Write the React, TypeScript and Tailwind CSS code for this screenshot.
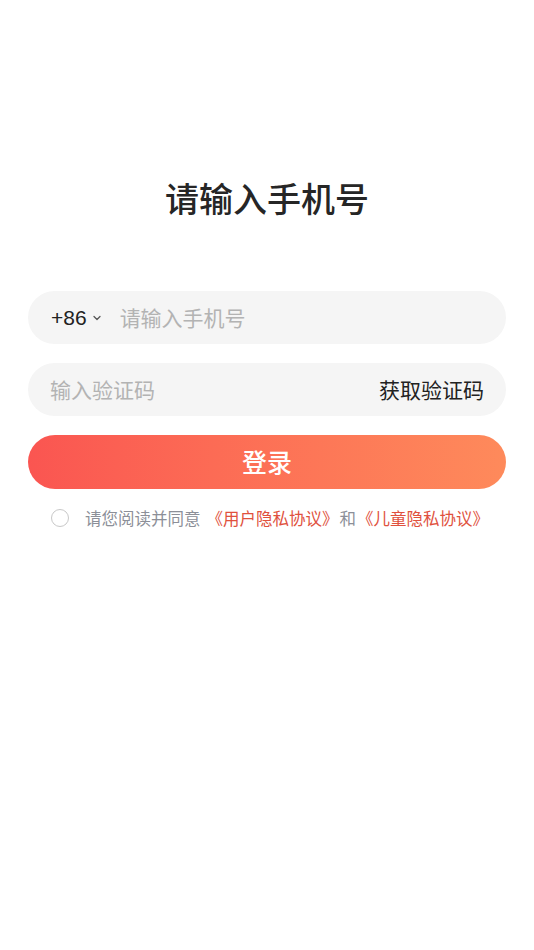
import { ChevronDown } from "lucide-react";

const font = { fontFamily: '"Noto Sans CJK SC", "Noto Sans", sans-serif' };
const latin = { fontFamily: '"Liberation Sans", "Noto Sans CJK SC", sans-serif' };

export default function App() {
  return (
    <div className="min-h-[950px] w-full bg-white px-[28px]" style={font}>
      <h1 className="pt-[176px] text-center text-[34px] font-medium leading-[44px] text-[#262626]">
        请输入手机号
      </h1>

      <div className="mt-[71px] flex h-[53px] items-center rounded-full bg-[#f5f5f5] pl-[23px] pr-6">
        <span className="text-[21px] text-[#222]" style={latin}>+86</span>
        <ChevronDown className="ml-[4px] h-3 w-3 text-[#555]" strokeWidth={2.5} />
        <span className="ml-[17px] text-[21px] text-[#b3b3b3]">请输入手机号</span>
      </div>

      <div className="mt-[19px] flex h-[53px] items-center justify-between rounded-full bg-[#f5f5f5] pl-[22px] pr-[22px]">
        <span className="text-[21px] text-[#b3b3b3]">输入验证码</span>
        <span className="text-[21px] text-[#222]">获取验证码</span>
      </div>

      <button className="mt-[19px] flex h-[54px] w-full items-center justify-center rounded-full bg-gradient-to-r from-[#fa5551] to-[#fe8a5b] text-[25px] font-medium text-white">
        登录
      </button>

      <div className="mt-[17px] flex items-center pl-[23px] text-[16.5px] leading-[24px]">
        <span className="h-[18px] w-[18px] rounded-full border border-[#c8c8c8]" />
        <span className="ml-[16px] text-[#8c8f98]">请您阅读并同意</span>
        <span className="ml-[6px] text-[#e0513d]">《用户隐私协议》</span>
        <span className="ml-[1px] mr-[1px] text-[#8c8f98]">和</span>
        <span className="text-[#e0513d]">《儿童隐私协议》</span>
      </div>
    </div>
  );
}
